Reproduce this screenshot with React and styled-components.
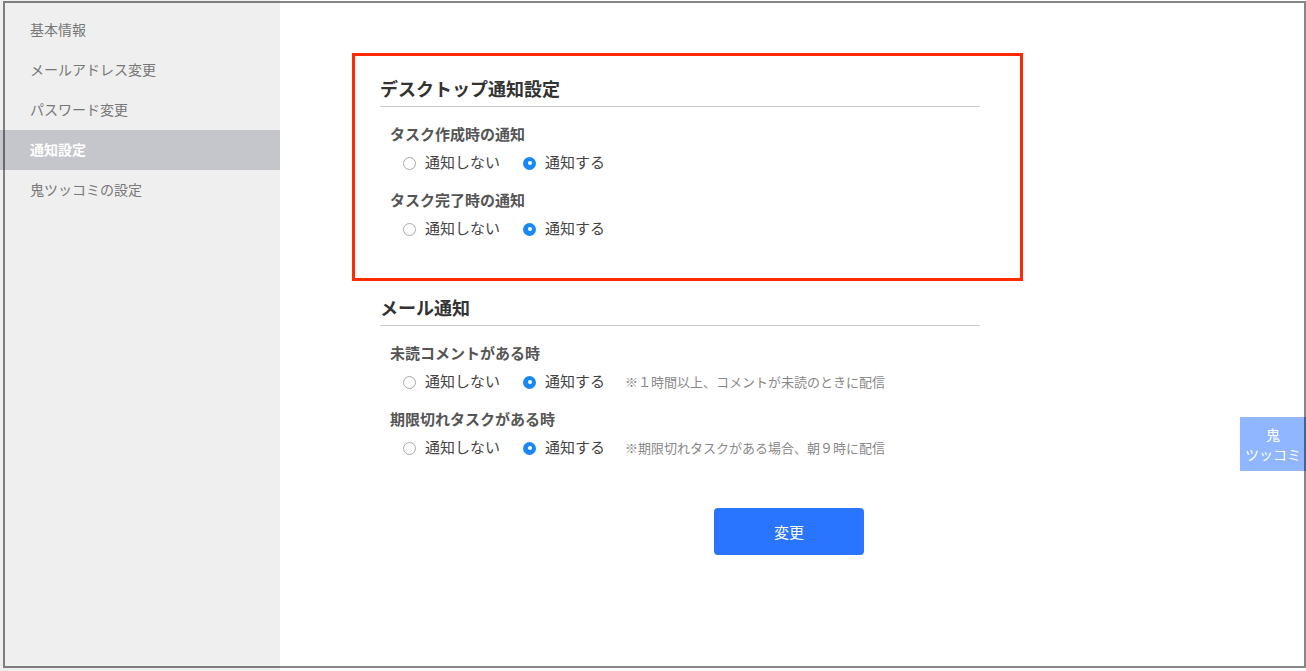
import React, { useState } from 'react';
import styled, { createGlobalStyle } from 'styled-components';

const GlobalStyle = createGlobalStyle`
  html, body {
    margin: 0;
    padding: 0;
    height: 100%;
  }
  body {
    font-family: "Noto Sans CJK JP", "Noto Sans", sans-serif;
    color: #333;
    background: #fff;
  }
  #root {
    height: 100%;
  }
`;

const Page = styled.div`
  display: flex;
  height: 100vh;
  position: relative;
`;

const Frame = styled.div`
  position: absolute;
  left: 3px;
  top: 1px;
  right: 0;
  bottom: 3px;
  border: 2px solid rgba(0, 0, 0, 0.47);
  pointer-events: none;
  z-index: 10;
`;

const Sidebar = styled.nav`
  width: 280px;
  flex-shrink: 0;
  background: #efefef;
  padding-top: 10px;
`;

const NavItem = styled.div`
  height: 40px;
  display: flex;
  align-items: center;
  padding-left: 30px;
  padding-bottom: 2px;
  box-sizing: border-box;
  font-size: 14px;
  color: ${(p) => (p.$active ? '#fff' : '#777')};
  font-weight: ${(p) => (p.$active ? 700 : 400)};
  background: ${(p) => (p.$active ? '#c5c6cb' : 'transparent')};
  cursor: pointer;
`;

const Main = styled.main`
  flex: 1;
  padding: 53px 0 0 100px;
`;

const Column = styled.div`
  width: 600px;
`;

const Section = styled.section`
  ${(p) =>
    p.$highlight
      ? `
    margin: 0 -43px 0 -28px;
    padding: 20px 40px 40px 25px;
    border: 3px solid #ff2a00;
  `
      : `
    margin-top: 14px;
  `}
`;

const SectionTitle = styled.h2`
  margin: 0;
  font-size: 18px;
  line-height: 24px;
  font-weight: 700;
  color: #333;
  padding-bottom: 6px;
  border-bottom: 1px solid #ccc;
`;

const Group = styled.div`
  padding-left: 10px;
  margin-top: ${(p) => (p.$first ? '17px' : '18px')};
`;

const GroupTitle = styled.h3`
  margin: 0;
  font-size: 15px;
  line-height: 20px;
  font-weight: 700;
  color: #555;
`;

const RadioRow = styled.div`
  display: flex;
  align-items: center;
  margin-top: 8px;
  padding-left: 13px;
  height: 20px;
`;

const Option = styled.label`
  display: flex;
  align-items: center;
  margin-right: 23px;
  font-size: 15px;
  line-height: 20px;
  color: #444;
  cursor: pointer;
`;

const Radio = styled.span`
  width: 13px;
  height: 13px;
  box-sizing: border-box;
  border-radius: 50%;
  margin-right: 9px;
  margin-top: 2px;
  border: ${(p) => (p.$checked ? 'none' : '1px solid #aaa')};
  background: ${(p) => (p.$checked ? '#1a87f7' : '#fff')};
  display: flex;
  align-items: center;
  justify-content: center;

  &::after {
    content: '';
    display: ${(p) => (p.$checked ? 'block' : 'none')};
    width: 4px;
    height: 4px;
    border-radius: 50%;
    background: #fff;
  }
`;

const Note = styled.span`
  font-size: 13px;
  color: #888;
  margin-left: -3px;
`;

const Submit = styled.button`
  display: block;
  margin: 51px 0 0 334px;
  width: 150px;
  height: 47px;
  border: none;
  border-radius: 4px;
  background: #2975ff;
  color: #fff;
  font-family: inherit;
  font-size: 15px;
  cursor: pointer;
`;

const FloatTab = styled.div`
  position: fixed;
  right: 0;
  top: 417px;
  width: 66px;
  height: 54px;
  background: #90b6ff;
  color: #fff;
  font-size: 14px;
  line-height: 20px;
  text-align: center;
  display: flex;
  flex-direction: column;
  justify-content: center;
  z-index: 5;
`;

const navItems = ['基本情報', 'メールアドレス変更', 'パスワード変更', '通知設定', '鬼ツッコミの設定'];

const sections = [
  {
    title: 'デスクトップ通知設定',
    highlight: true,
    groups: [
      { key: 'taskCreated', title: 'タスク作成時の通知' },
      { key: 'taskDone', title: 'タスク完了時の通知' },
    ],
  },
  {
    title: 'メール通知',
    groups: [
      { key: 'unread', title: '未読コメントがある時', note: '※１時間以上、コメントが未読のときに配信' },
      { key: 'overdue', title: '期限切れタスクがある時', note: '※期限切れタスクがある場合、朝９時に配信' },
    ],
  },
];

function RadioGroup({ value, onChange }) {
  return (
    <>
      <Option onClick={() => onChange(false)}>
        <Radio $checked={!value} />
        通知しない
      </Option>
      <Option onClick={() => onChange(true)}>
        <Radio $checked={value} />
        通知する
      </Option>
    </>
  );
}

export default function App() {
  const [settings, setSettings] = useState({
    taskCreated: true,
    taskDone: true,
    unread: true,
    overdue: true,
  });

  return (
    <Page>
      <GlobalStyle />
      <Sidebar>
        {navItems.map((item) => (
          <NavItem key={item} $active={item === '通知設定'}>
            {item}
          </NavItem>
        ))}
      </Sidebar>
      <Main>
        <Column>
          {sections.map((section) => (
            <Section key={section.title} $highlight={section.highlight}>
              <SectionTitle>{section.title}</SectionTitle>
              {section.groups.map((g, i) => (
                <Group key={g.key} $first={i === 0}>
                  <GroupTitle>{g.title}</GroupTitle>
                  <RadioRow>
                    <RadioGroup
                      value={settings[g.key]}
                      onChange={(v) => setSettings({ ...settings, [g.key]: v })}
                    />
                    {g.note && <Note>{g.note}</Note>}
                  </RadioRow>
                </Group>
              ))}
            </Section>
          ))}
          <Submit type="button">変更</Submit>
        </Column>
      </Main>
      <FloatTab>
        <span>鬼</span>
        <span>ツッコミ</span>
      </FloatTab>
      <Frame />
    </Page>
  );
}
